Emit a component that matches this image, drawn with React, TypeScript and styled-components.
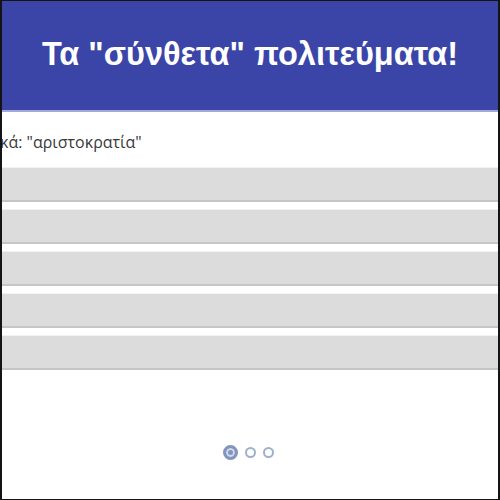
import styled, { createGlobalStyle } from "styled-components";

const Global = createGlobalStyle`
  html, body {
    margin: 0;
    padding: 0;
    background: #fff;
  }
`;

const slides = [0, 1, 2];
const rows = [0, 1, 2, 3, 4];

export default function App() {
  return (
    <>
      <Global />
      <Frame>
        <Header>
          <Title>Τα "σύνθετα" πολιτεύματα!</Title>
        </Header>

        <Subtitle>κά: "αριστοκρατία"</Subtitle>

        <Options>
          {rows.map((r) => (
            <Option key={r} />
          ))}
        </Options>

        <Pager>
          {slides.map((s) => (
            <Dot key={s} $active={s === 0} />
          ))}
        </Pager>
      </Frame>
    </>
  );
}

const Frame = styled.div`
  width: 500px;
  height: 500px;
  box-sizing: border-box;
  border: 1px solid #141414;
  border-left-width: 2px;
  border-right-width: 2px;
  overflow: hidden;
  display: flex;
  flex-direction: column;
  background: #fff;
`;

const Header = styled.div`
  height: 109px;
  flex-shrink: 0;
  background: #3b45a7;
  border-bottom: 2px solid #a3a8dc;
  display: flex;
  align-items: center;
  justify-content: center;
`;

const Title = styled.div`
  color: #fff;
  font-family: "Liberation Sans", Arial, sans-serif;
  font-weight: bold;
  font-size: 32.5px;
  margin-top: -2px;
`;

const Subtitle = styled.div`
  margin-top: 20px;
  margin-left: -2px;
  height: 20px;
  line-height: 20px;
  font-family: "Open Sans", "Noto Sans", sans-serif;
  font-size: 16px;
  color: #3a3a3a;
  white-space: nowrap;
`;

const Options = styled.div`
  margin-top: 16px;
  display: flex;
  flex-direction: column;
  gap: 8px;
`;

const Option = styled.div`
  height: 32px;
  background: #dcdcdc;
  border-bottom: 2px solid #c6c6c6;
  box-shadow: 0 -1px 0 #f2f2f2;
`;

const Pager = styled.div`
  margin-top: 74px;
  height: 16px;
  display: flex;
  align-items: center;
  justify-content: center;
  gap: 7px;
  margin-left: -4px;
`;

const Dot = styled.div<{ $active: boolean }>`
  box-sizing: border-box;
  border-radius: 50%;
  width: ${(p) => (p.$active ? "15px" : "11px")};
  height: ${(p) => (p.$active ? "15px" : "11px")};
  border: ${(p) => (p.$active ? "3px solid #8295bd" : "2px solid #9eafcf")};
  background: ${(p) => (p.$active ? "#8295bd" : "#fff")};
  box-shadow: ${(p) => (p.$active ? "inset 0 0 0 2px #d3dbec" : "none")};
`;
